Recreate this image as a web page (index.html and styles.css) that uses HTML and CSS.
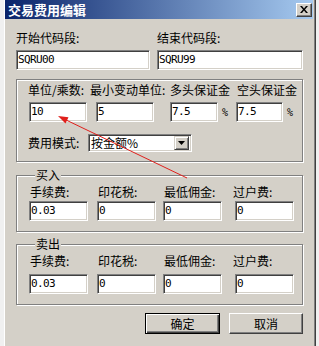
FILE: index.html
```html
<!DOCTYPE html>
<html lang="zh-CN">
<head>
  <meta charset="UTF-8" />
  <title>交易费用编辑</title>
  <link rel="stylesheet" href="styles.css">
</head>
<body>

<div class="page">
  <div class="dialog">
    <div class="frame">
      <div class="titlebar">
        <span class="title">交易费用编辑</span>
        <span class="close">
          <svg width="8" height="7" viewBox="0 0 8 7">
            <path d="M0 0h2l2 2.5 2-2.5h2l-3 3.5 3 3.5h-2l-2-2.5-2 2.5h-2l3-3.5z" fill="#000"/>
          </svg>
        </span>
      </div>

      <div class="content">
        <div class="code-row">
          <div class="field field-start">
            <div class="label">开始代码段:</div>
            <div class="edit">SQRU00</div>
          </div>
          <div class="field field-end">
            <div class="label">结束代码段:</div>
            <div class="edit">SQRU99</div>
          </div>
        </div>

        <div class="group group-main">
          <div class="main-labels">
            <div class="label lab-unit">单位/乘数:</div>
            <div class="label lab-tick">最小变动单位:</div>
            <div class="label lab-long">多头保证金</div>
            <div class="label">空头保证金</div>
          </div>
          <div class="main-inputs">
            <div class="edit in-unit">10</div>
            <div class="edit in-tick">5</div>
            <div class="edit in-long">7.5</div>
            <div class="pct">%</div>
            <div class="edit in-short">7.5</div>
            <div class="pct">%</div>
          </div>
          <div class="mode-row">
            <div class="label lab-mode">费用模式:</div>
            <div class="combo">
              <span class="combo-text">按金额%</span>
              <span class="combo-btn">
                <svg width="7" height="4" viewBox="0 0 7 4"><path d="M0 0h7l-3.5 4z" fill="#000"/></svg>
              </span>
            </div>
          </div>
        </div>

        <div class="group group-fee">
          <div class="group-title">买入</div>
          <div class="fee-grid">
            <div class="label">手续费:</div>
            <div class="label">印花税:</div>
            <div class="label">最低佣金:</div>
            <div class="label lab-last">过户费:</div>
            <div class="edit">0.03</div>
            <div class="edit">0</div>
            <div class="edit">0</div>
            <div class="edit">0</div>
          </div>
        </div>

        <div class="group group-fee group-sell">
          <div class="group-title">卖出</div>
          <div class="fee-grid">
            <div class="label">手续费:</div>
            <div class="label">印花税:</div>
            <div class="label">最低佣金:</div>
            <div class="label lab-last">过户费:</div>
            <div class="edit">0.03</div>
            <div class="edit">0</div>
            <div class="edit">0</div>
            <div class="edit">0</div>
          </div>
        </div>

        <div class="buttons">
          <div class="btn btn-default">确定</div>
          <div class="btn btn-cancel">取消</div>
        </div>
      </div>
    </div>
  </div>
</div>

<svg class="arrow" width="319" height="346" viewBox="0 0 319 346">
  <line x1="187" y1="178" x2="64" y2="119" stroke="#e0201c" stroke-width="1" />
  <path d="M58 116 L65.5 123.5 L68.5 117.3 Z" fill="#e0201c" />
</svg>

</body>
</html>
```

FILE: styles.css
```css
html, body {
  margin: 0; padding: 0;
  height: 100%;
  overflow: hidden;
}

body {
  background: #f0f0f0;
  color: #000;
  font-family: "Noto Sans CJK SC", sans-serif;
  font-size: 12px;
  position: relative;
}

.page {
  display: flex;
  height: 100%;
}

.dialog {
  margin-left: 4px;
  width: 310px;
  border-left: 1px solid #fff;
  border-right: 1px solid #404040;
  background: #d4d0c8;
}

.frame {
  height: 100%;
  border-right: 1px solid #808080;
  padding-right: 1px;
}

/* title bar */
.titlebar {
  height: 19px;
  display: flex;
  align-items: center;
  justify-content: space-between;
  padding: 0 1px 0 3px;
  background: linear-gradient(to right, #0a246a, #a6caf0);
}

.title {
  color: #fff;
  font-weight: 700;
  font-size: 13px;
  line-height: 19px;
}

.close {
  box-sizing: border-box;
  width: 16px;
  height: 14px;
  display: flex;
  align-items: center;
  justify-content: center;
  background: #d4d0c8;
  border: 1px solid;
  border-color: #fff #404040 #404040 #fff;
  box-shadow: inset -1px -1px #808080;
}

.content {
  padding: 12px 10px 0 11px;
}

.label {
  line-height: 14px;
  white-space: nowrap;
}

.edit {
  box-sizing: border-box;
  height: 20px;
  background: #fff;
  border: 1px solid;
  border-color: #808080 #fff #fff #808080;
  box-shadow: inset 1px 1px #404040, inset -1px -1px #d4d0c8;
  padding: 0 1px;
  font-family: "DejaVu Sans Mono", monospace;
  font-size: 11px;
  letter-spacing: -0.6px;
  line-height: 18px;
  white-space: nowrap;
}

/* code fields */
.code-row {
  display: flex;
  gap: 7px;
}

.field .label {
  margin-bottom: 5px;
}

.field-start { width: 134px; }
.field-end { width: 146px; }

/* group boxes */
.group {
  border: 1px solid #808080;
  box-shadow: inset 1px 1px #fff, 1px 1px #fff;
}

.group-main {
  margin-top: 9px;
  padding: 3px 0 9px 11px;
}

.main-labels {
  display: flex;
}

.lab-unit { width: 62px; }
.lab-tick { width: 80px; }
.lab-long { width: 67px; }

.main-inputs {
  margin-top: 5px;
  display: flex;
  align-items: center;
}

.in-unit { width: 58px; margin-left: 1px; }
.in-tick { width: 58px; margin-left: 9px; }
.in-long { width: 48px; margin-left: 16px; }
.in-short { width: 47px; }

.pct {
  width: 10px;
  margin-left: 4px;
  font-family: "DejaVu Sans Mono", monospace;
  font-size: 10px;
}

.pct + .edit {
  margin-left: 0;
}

.main-inputs .pct:nth-child(4) {
  width: 14px;
}

.mode-row {
  margin-top: 12px;
  display: flex;
  align-items: center;
}

.lab-mode { width: 60px; }

.combo {
  box-sizing: border-box;
  width: 104px;
  height: 18px;
  display: flex;
  align-items: center;
  justify-content: space-between;
  background: #fff;
  border: 1px solid;
  border-color: #808080 #fff #fff #808080;
  box-shadow: inset 1px 1px #404040, inset -1px -1px #d4d0c8;
  padding: 1px 2px 1px 2px;
}

.combo-text {
  line-height: 14px;
}

.combo-btn {
  box-sizing: border-box;
  width: 15px;
  height: 14px;
  display: flex;
  align-items: center;
  justify-content: center;
  background: #d4d0c8;
  border: 1px solid;
  border-color: #d4d0c8 #404040 #404040 #d4d0c8;
  box-shadow: inset 1px 1px #fff, inset -1px -1px #808080;
}

.group-fee {
  margin-top: 13px;
  padding: 0 0 10px 12px;
}

.group-sell {
  margin-top: 12px;
}

.group-title {
  width: fit-content;
  margin: -8px 0 0 6px;
  padding: 0 1px;
  line-height: 14px;
  background: #d4d0c8;
}

.fee-grid {
  margin-top: 3px;
  display: grid;
  grid-template-columns: 68px 66px 72px 59px;
  row-gap: 2px;
}

.group-sell .fee-grid {
  row-gap: 6px;
}

.fee-grid .label {
  padding-left: 1px;
}

.fee-grid .lab-last {
  padding-left: 0;
  margin-left: -2px;
}

.fee-grid .edit {
  width: 59px;
}

/* buttons */
.buttons {
  margin-top: 8px;
  display: flex;
  justify-content: flex-end;
  gap: 9px;
}

.btn {
  box-sizing: border-box;
  height: 21px;
  display: flex;
  align-items: center;
  justify-content: center;
  background: #d4d0c8;
  border: 1px solid;
  border-color: #fff #404040 #404040 #fff;
  box-shadow: inset -1px -1px #808080;
}

.btn-default {
  width: 75px;
  border-color: #000;
  box-shadow: inset 1px 1px #fff, inset -1px -1px #404040, inset -2px -2px #808080;
}

.btn-cancel {
  width: 74px;
}

.arrow {
  position: absolute;
  top: 0;
  left: 0;
  pointer-events: none;
}
```
